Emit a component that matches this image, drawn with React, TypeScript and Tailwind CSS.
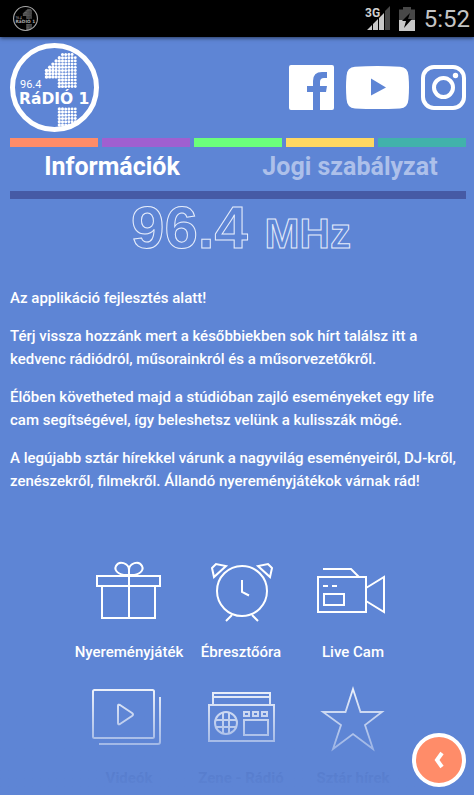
import React from "react";

const stripes = ["bg-[#ff8c69]", "bg-[#a05fd0]", "bg-[#6bff7b]", "bg-[#ffd862]", "bg-[#41b2ab]"];

const paragraphs = [
  ["Az applikáció fejlesztés alatt!"],
  ["Térj vissza hozzánk mert a későbbiekben sok hírt találsz itt a", "kedvenc rádiódról, műsorainkról és a műsorvezetőkről."],
  ["Élőben követheted majd a stúdióban zajló eseményeket egy life", "cam segítségével, így beleshetsz velünk a kulisszák mögé."],
  ["A legújabb sztár hírekkel várunk a nagyvilág eseményeiről, DJ-kről,", "zenészekről, filmekről. Állandó nyereményjátékok várnak rád!"],
];

function dotRows() {
  const dots: { x: number; y: number; r: number }[] = [];
  const pitch = 3.2;
  for (let row = 0; row < 24; row++) {
    if (row > 10 && row < 17) continue;
    for (let col = -4; col < 6; col++) {
      const flag = row >= 2 && row <= 7 && -col <= Math.min(row - 1, 4);
      if (col < 0 && !flag) continue;
      if (row === 0 && (col === 0 || col === 5)) continue;
      const x = 49.3 + col * pitch;
      const y = 11.5 + row * pitch;
      if (Math.hypot(x - 44.5, y - 44.5) > 42) continue;
      dots.push({ x, y, r: 1.6 - col * 0.04 });
    }
  }
  return dots;
}

function Logo({ className, ring }: { className: string; ring: number }) {
  return (
    <svg viewBox="0 0 89 89" className={className} role="img" aria-label="96.4 Rádió 1">
      <circle cx="44.5" cy="44.5" r={44.5 - ring / 2} fill="none" stroke="currentColor" strokeWidth={ring} />
      {dotRows().map((d, i) => (
        <circle key={i} cx={d.x} cy={d.y} r={d.r} fill="currentColor" />
      ))}
      <text x="10" y="45" fill="currentColor" fontSize="11" className="font-['Roboto',sans-serif]">96.4</text>
      <text x="9" y="61" fill="currentColor" fontSize="15.500" className="font-['DejaVu_Sans',sans-serif] font-bold">RáDIÓ 1</text>
    </svg>
  );
}

function StatusBar() {
  return (
    <div className="relative z-10 flex h-[37px] shrink-0 items-center bg-black pr-1 pl-[13px] text-[#c4c4c4] shadow-[0_1px_4px_rgba(0,0,0,0.6)]">
      <Logo className="size-[25px] text-[#a8a8a8]" ring={4} />
      <svg viewBox="0 0 26 26" className="ml-auto h-[26px] w-[26px]" aria-hidden="true">
        <path d="M25 0V24H20V5Z" fill="#484848" />
        <path d="M2 24 7 19V24ZM8 18 13 13V24H8ZM14 12 19 7V24H14Z" fill="#c8c8c8" />
        <text x="0" y="11" fontSize="12" fill="#d0d0d0" className="font-['Roboto',sans-serif] font-bold">3G</text>
      </svg>
      <svg viewBox="0 0 16 24" className="ml-2 h-6 w-4" aria-hidden="true">
        <path d="M0 2.5H4V0H12V2.5H16V24H0Z" fill="#484848" />
        <path d="M0 13H16V24H0Z" fill="#c8c8c8" />
        <path d="M11 6 3 14H7L5 21 13 12H9Z" fill="#000" />
      </svg>
      <span className="ml-[9px] font-['Roboto',sans-serif] text-2xl leading-none">5:52</span>
    </div>
  );
}

function Header() {
  return (
    <header className="flex items-center justify-between">
      <Logo className="size-[89px] text-white" ring={5} />
      <nav className="flex items-center gap-3 text-white">
        <a href="#facebook" aria-label="Facebook">
          <svg viewBox="0 0 45 45" className="size-[45px]" fill="currentColor">
            <path d="M2 0H43Q45 0 45 2V43Q45 45 43 45H31V27H37L38 21H31V17Q31 13 35 13H38V7H33Q24 7 24 16V21H18V27H24V45H2Q0 45 0 43V2Q0 0 2 0Z" />
          </svg>
        </a>
        <a href="#youtube" aria-label="YouTube">
          <svg viewBox="0 0 63 43" className="h-[43px] w-[63px]" fill="currentColor" fillRule="evenodd">
            <path d="M9 .8Q31 -.8 54 .8 62 1 62.5 10 63.5 21 62.5 33 62 42 54 42.4 31 43.6 9 42.4 1 42 .5 33-.5 21 .5 10 1 1 9 .8ZM25 12.500V29.500L40 21.500Z" />
          </svg>
        </a>
        <a href="#instagram" aria-label="Instagram">
          <svg viewBox="0 0 45 45" className="size-[45px]" fill="none" stroke="currentColor" strokeWidth="4">
            <rect x="2" y="2" width="41" height="41" rx="11" />
            <circle cx="22.500" cy="22.500" r="9.500" />
            <circle cx="34.500" cy="10.500" r="2.700" fill="currentColor" stroke="none" />
          </svg>
        </a>
      </nav>
    </header>
  );
}

const line = { fill: "none", stroke: "currentColor", strokeWidth: 2 };

const items = [
  {
    label: "Nyereményjáték",
    icon: (
      <g {...line}>
        <path d="M4 15H67V25H4ZM9 25V57H62V25M36 7V57M36 14C25 15 21 9 23 5 26-1 36 2 36 9 36 2 46-1 49 5 51 9 47 15 36 14" />
      </g>
    ),
  },
  {
    label: "Ébresztőóra",
    icon: (
      <g {...line}>
        <circle cx="37" cy="30" r="25" />
        <path d="M37 19V31L44 34.500M27 54 21 60M47 54 53 60M8 6 11 3 21 5 9 16 7 7ZM66 6 63 3 53 5 65 16 67 7Z" />
      </g>
    ),
  },
  {
    label: "Live Cam",
    icon: (
      <g {...line}>
        <path d="M1 16H49V51H1ZM6 8H34L42 16M49 27 67 16V51L49 40M7 33H27V44H7ZM6 25H11M15 25H20" />
      </g>
    ),
  },
  {
    label: "Videók",
    icon: (
      <g {...line}>
        <rect x="0" y="3" width="61" height="48" rx="1.500" />
        <path d="M67 10V55Q67 57 65 57H6" />
        <path d="M25 19Q25 17 27 18L39 26Q41 27.500 39 29L27 37Q25 38 25 36Z" />
      </g>
    ),
  },
  {
    label: "Zene - Rádió",
    icon: (
      <g {...line}>
        <path d="M4 18H69V54H4ZM8 18V6H65V18M8 10H65M39 33H63V48H39ZM39 25H44V29H39ZM48 25H53V29H48ZM57 25H62V29H57Z" />
        <circle cx="21" cy="36" r="11" />
        <path d="M18 26V46M24 26V46M10 33H32M10 40H32" />
      </g>
    ),
  },
  {
    label: "Sztár hírek",
    icon: (
      <g {...line} strokeWidth={1.8}>
        <path d="M36 2 43.500 25H65L48 38 56 62 36 47 16 62 24 38 6 25H28.500Z" />
      </g>
    ),
  },
];

export default function App() {
  return (
    <div className="relative flex h-screen flex-col overflow-hidden bg-[#5e85d5] font-['Roboto',sans-serif] text-white">
      <StatusBar />
      <main className="min-h-0 flex-1 overflow-hidden px-2.5 pt-1.5 pr-2">
        <Header />
        <div className="mt-1.5 grid h-[9px] grid-cols-5 gap-1">
          {stripes.map((c) => (
            <span key={c} className={c} />
          ))}
        </div>
        <div role="tablist" className="grid h-[52px] grid-cols-2 border-b-8 border-[#465aa5] pb-1 text-[25px] font-bold">
          <button role="tab" aria-selected="true" className="pr-6">Információk</button>
          <button role="tab" aria-selected="false" className="pr-1 text-[#adc0ea]">Jogi szabályzat</button>
        </div>
        <h1 className="h-22 pl-1.5 text-center font-['Liberation_Sans',sans-serif] text-[60px] leading-[58px] font-bold text-transparent [-webkit-text-stroke:1px_#e6edfb]">
          96.4 <span className="text-[42px]">MHz</span>
        </h1>
        <div className="flex flex-col gap-[15px] text-[15px] leading-[23px] font-medium whitespace-nowrap">
          {paragraphs.map((p) => (
            <p key={p[0]}>
              {p.map((l) => (
                <span key={l} className="block">{l}</span>
              ))}
            </p>
          ))}
        </div>
        <div className="mt-17 pl-1.5">
          <ul className="mx-auto grid w-[336px] grid-cols-3 gap-y-[38px]">
            {items.map((item, i) => (
              <li key={item.label}>
                <a href={"#" + i} className="flex flex-col items-center gap-[18px] whitespace-nowrap">
                  <svg viewBox="0 0 72 62" className="h-[62px] w-[72px] overflow-visible" aria-hidden="true">{item.icon}</svg>
                  <span className={i < 3 ? "h-2 text-[15px] leading-[23px] font-medium" : "h-2 text-[15px] leading-[23px] font-bold text-[#3a5bab]"}>
                    {item.label}
                  </span>
                </a>
              </li>
            ))}
          </ul>
        </div>
      </main>
      <div className="pointer-events-none absolute inset-x-0 bottom-0 h-[120px] bg-linear-to-b from-[#5e85d5]/0 to-[#5e85d5]" />
      <button aria-label="Vissza" className="absolute right-2 bottom-2 flex size-[54px] items-center justify-center rounded-full border-4 border-white bg-[#ff8c69]">
        <svg viewBox="0 0 10 18" className="h-[18px] w-[10px]" fill="none" stroke="currentColor" strokeWidth="4">
          <path d="M8 2 3 9 8 16" />
        </svg>
      </button>
    </div>
  );
}
